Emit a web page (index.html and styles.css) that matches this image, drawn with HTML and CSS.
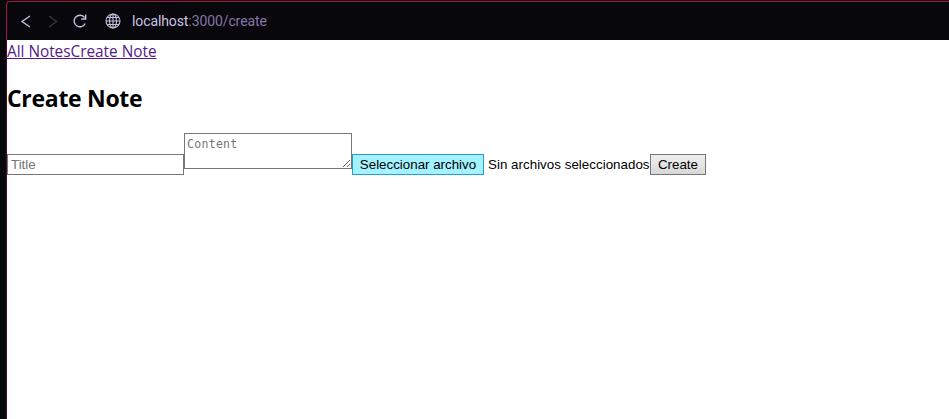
FILE: index.html
```html
<!DOCTYPE html>
<html lang="es">
<head>
<meta charset="utf-8">
<title>Create Note</title>
<link rel="stylesheet" href="styles.css">
</head>
<body>
<div class="window">
  <header class="toolbar">
    <svg class="icon back" width="12" height="14" viewBox="0 0 12 14"><path d="M10 2 2 7.500l8 5.500"/></svg>
    <svg class="icon forward" width="12" height="14" viewBox="0 0 12 14"><path d="M1 2 8.500 7.500 1 13"/></svg>
    <svg class="icon reload" width="16" height="16" viewBox="0 0 16 16"><path d="M12.600 4.500A5.800 5.800 0 1 0 13.200 10.500M13.700 1.500v4.500H9.200"/></svg>
    <svg class="icon globe" width="16" height="16" viewBox="0 0 16 16"><circle cx="8" cy="8" r="7"/><ellipse cx="8" cy="8" rx="3.500" ry="7"/><path d="M8 1v14M1 8h14M2 4.500h12M2 11.500h12"/></svg>
    <div class="address"><span class="host">localhost</span>:3000/create</div>
  </header>
  <main class="page">
    <nav class="nav"><a href="#">All Notes</a><a href="#">Create Note</a></nav>
    <h2 class="heading">Create Note</h2>
    <form class="form">
      <input class="title-field" type="text" placeholder="Title">
      <textarea class="content-field" placeholder="Content"></textarea>
      <button class="file-button" type="button">Seleccionar archivo</button>
      <span class="file-status">Sin archivos seleccionados</span>
      <button class="create-button" type="button">Create</button>
    </form>
  </main>
</div>
</body>
</html>
```
FILE: styles.css
```css
* { box-sizing: border-box; }
body {
  margin: 0;
  height: 419px;
  overflow: hidden;
  padding: 1px 0 0 6px;
  background: #08070c;
}
.window { height: 418px; }
.toolbar {
  display: flex;
  align-items: center;
  height: 39px;
  padding-left: 13px;
  background: #08070c;
  border-top: 1px solid #a31943;
  border-left: 1px solid #a31943;
  border-top-left-radius: 4px;
}
.icon {
  flex: none;
  fill: none;
  stroke: #c6bfdc;
  stroke-width: 1.4;
}
.back { margin-right: 16px; }
.forward { stroke: #39373f; margin-right: 11.5px; }
.reload { margin-right: 17px; }
.globe { stroke-width: 1.1; margin-right: 11.5px; }
.address {
  font: 14px/20px Roboto, sans-serif;
  letter-spacing: -0.1px;
  color: #8576a9;
  white-space: nowrap;
}
.host { color: #cdc5e2; }
.page {
  height: 379px;
  background: #fff;
  border-left: 1px solid #4c0b25;
  color: #000;
}
.nav {
  display: flex;
  height: 22px;
  font: 15.400px/23px "Open Sans", sans-serif;
  letter-spacing: -0.03px;
}
.nav a { color: #551a8b; text-underline-offset: 1px; }
.heading {
  margin: 20px 0 18px;
  font: bold 23px/33px "Open Sans", sans-serif;
  letter-spacing: -0.3px;
}
.form {
  display: flex;
  align-items: flex-start;
  font: 13.333px/19px "Liberation Sans", sans-serif;
}
.title-field {
  width: 177px;
  height: 21px;
  margin-top: 21px;
  padding: 1px 2px 1px 3px;
  border: 1px solid #767676;
  font: inherit;
}
.content-field {
  width: 168px;
  height: 36px;
  padding: 2px;
  border: 1px solid #767676;
  font: 11.500px/16px "DejaVu Sans Mono", monospace;
  letter-spacing: 0.3px;
}
.title-field::placeholder, .content-field::placeholder { color: #757575; }
.file-button, .create-button {
  height: 21px;
  margin-top: 21px;
  padding: 0;
  border: 1px solid #767676;
  font: inherit;
  color: #000;
  white-space: nowrap;
}
.file-button {
  width: 132px;
  margin-right: 4px;
  background: #a4f2ff;
  border-color: #289bd3;
}
.file-status {
  width: 162px;
  margin-top: 21px;
  line-height: 21px;
  letter-spacing: 0.03px;
  white-space: nowrap;
}
.create-button {
  width: 56px;
  background: linear-gradient(#efefef, #d8d8d8);
}
```
